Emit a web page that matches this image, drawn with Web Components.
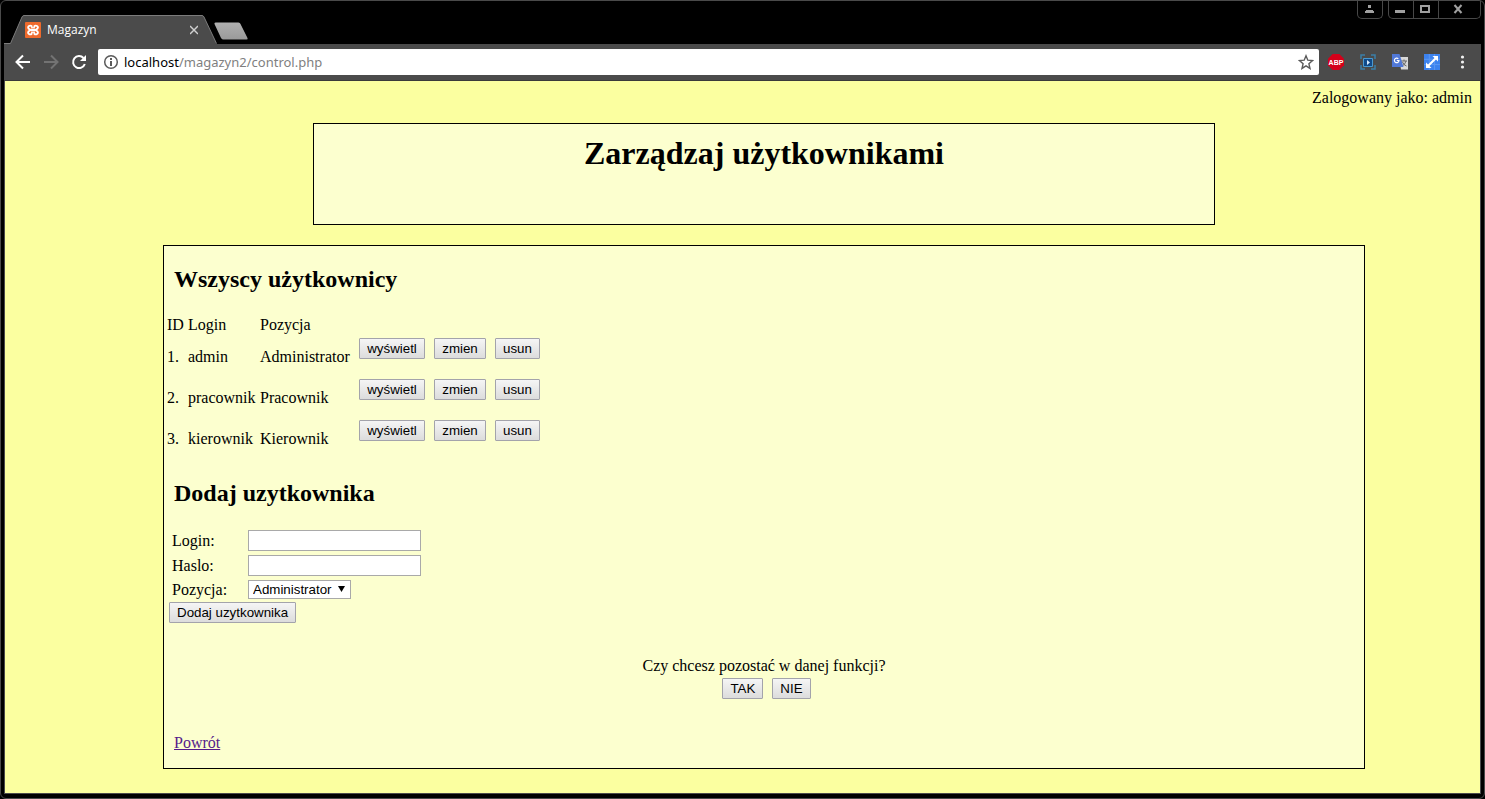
<!DOCTYPE html>
<html lang="pl">
<head>
<meta charset="utf-8">
<title>Magazyn</title>
<style>
html, body { height: 100%; margin: 0; background: #000; }
</style>
</head>
<body>
<browser-window>
  <tab-strip slot="tabs" label="Magazyn"></tab-strip>
  <browser-toolbar slot="toolbar" host="localhost" path="/magazyn2/control.php"></browser-toolbar>
  <admin-page></admin-page>
</browser-window>

<script>
const define = (name, html, setup) => customElements.define(name, class extends HTMLElement {
  constructor() {
    super();
    this.attachShadow({ mode: 'open' }).innerHTML = html;
  }
  connectedCallback() {
    if (setup && !this.ready) { this.ready = true; setup(this, this.shadowRoot); }
  }
});

/* Raised grey push button with a real <button> inside. */
define('push-button', `
<style>
  :host { display: inline-block; vertical-align: top; }
  button {
    display: block; box-sizing: border-box; width: 100%; height: 21px; margin: 0; padding: 0 7px;
    border: 1px solid #a3a3ab; border-radius: 1px;
    background: linear-gradient(#f5f5f5, #dcdcdc);
    font-family: "Liberation Sans", Arial, sans-serif; color: #000; white-space: nowrap;
  }
</style>
<button type="button"><slot></slot></button>`);

/* Bordered pale box. */
define('site-panel', `
<style>
  :host { display: block; box-sizing: border-box; width: 100%; margin: 0 auto; border: 1px solid #000; background: #fcffcf; }
</style>
<slot></slot>`);

define('section-title', `
<style>
  :host { display: block; padding: 20px 10px; }
  h2 { margin: 0; font-size: 24px; line-height: 27px; }
</style>
<h2><slot></slot></h2>`);

define('user-table', `
<style>
  :host { display: block; }
  table { border-spacing: 2px; border-collapse: separate; table-layout: fixed; width: 379px; }
  th, td { padding: 1px; font-weight: normal; text-align: left; line-height: 18px; white-space: nowrap; }
  push-button { display: block; margin: 0 0 16px 5px; }
  .id { width: 19px; } .login { width: 70px; } .role { width: 92px; }
  .show { width: 73px; } .edit { width: 59px; } .drop { width: 52px; }
</style>
<table>
  <colgroup><col class="id"><col class="login"><col class="role"><col class="show"><col class="edit"><col class="drop"></colgroup>
  <thead><tr><th>ID</th><th>Login</th><th>Pozycja</th></tr></thead>
  <tbody></tbody>
</table>`, (el, root) => {
  const users = [['admin', 'Administrator'], ['pracownik', 'Pracownik'], ['kierownik', 'Kierownik']];
  root.querySelector('tbody').innerHTML = users.map(([login, role], i) => `
    <tr><td>${i + 1}.</td><td>${login}</td><td>${role}</td>
    ${['wyświetl', 'zmien', 'usun'].map(t => `<td><push-button>${t}</push-button></td>`).join('')}</tr>`).join('');
});

define('user-form', `
<style>
  :host { display: block; padding-left: 5px; }
  form { margin: 0; }
  .grid { display: grid; grid-template-columns: 72px max-content; gap: 4px; padding: 3px; align-items: center; justify-items: start; line-height: 18px; }
  input, select {
    box-sizing: border-box; margin: 0; border: 1px solid #a9a9a9; border-radius: 0;
    background: #fff; color: #000; font-family: "Liberation Sans", Arial, sans-serif;
  }
  input { width: 173px; height: 21px; padding: 1px; }
  .pick { display: grid; align-items: center; }
  .pick > * { grid-area: 1 / 1; }
  select { appearance: none; height: 19px; width: 103px; padding: 0 4px; }
  svg { justify-self: end; margin-right: 6px; pointer-events: none; }
</style>
<form>
  <div class="grid">
    <label for="login">Login:</label><input id="login" type="text">
    <label for="haslo">Haslo:</label><input id="haslo" type="password">
    <label for="pozycja">Pozycja:</label>
    <span class="pick">
      <select id="pozycja"><option>Administrator</option><option>Pracownik</option><option>Kierownik</option></select>
      <svg width="7" height="7" viewBox="0 0 7 7" aria-hidden="true"><path d="M0 0h7L3.500 6z"/></svg>
    </span>
  </div>
  <push-button>Dodaj uzytkownika</push-button>
</form>`);

define('stay-prompt', `
<style>
  :host { display: block; text-align: center; line-height: 18px; }
  p { margin: 0 0 3px; }
  div { display: flex; justify-content: center; gap: 4px; }
  push-button { margin-left: 5px; }
</style>
<p>Czy chcesz pozostać w danej funkcji?</p>
<div><push-button>TAK</push-button><push-button>NIE</push-button></div>`);

define('admin-page', `
<style>
  :host { display: block; padding: 8px 8px 24px 51px; font: 16px/18px "Liberation Serif", "Times New Roman", serif; color: #000; }
  .user { text-align: right; margin-bottom: 16px; }
  .head { max-width: 902px; min-height: 102px; margin-bottom: 20px; text-align: center; }
  h1 { margin: 0; padding-top: 11px; font-size: 32px; line-height: 36px; }
  .body { max-width: 1202px; }
  stay-prompt { margin-top: 34px; }
  .back { margin: 35px 10px 16px; }
  a { color: #551a8b; }
</style>
<div class="user">Zalogowany jako: admin</div>
<site-panel class="head"><h1>Zarządzaj użytkownikami</h1></site-panel>
<site-panel class="body">
  <section-title>Wszyscy użytkownicy</section-title>
  <user-table></user-table>
  <section-title>Dodaj uzytkownika</section-title>
  <user-form></user-form>
  <stay-prompt></stay-prompt>
  <div class="back"><a href="#">Powrót</a></div>
</site-panel>`);

define('window-controls', `
<style>
  :host { display: flex; gap: 5px; }
  div { display: flex; height: 17px; border: 1px solid #484848; border-top: 0; border-radius: 0 0 5px 5px; }
  button { padding: 0; border: 0; background: none; width: 24px; height: 17px; }
  button + button { border-left: 1px solid #484848; width: 25px; }
  button.close { width: 42px; }
  svg { display: block; margin: auto; }
</style>
<div><button aria-label="Profil"><svg width="24" height="17" fill="#a0a0a0"><path d="M10 4h3v3h-3zM8 9h7v2H8zM7 10h9v2H7z"/></svg></button></div>
<div>
  <button aria-label="Minimalizuj"><svg width="24" height="17"><path d="M6 9h10v3H6z" fill="#a0a0a0"/></svg></button>
  <button aria-label="Maksymalizuj"><svg width="24" height="17"><path d="M7 5h8v6H7z" fill="none" stroke="#a0a0a0" stroke-width="2"/></svg></button>
  <button class="close" aria-label="Zamknij"><svg width="41" height="17"><path d="M15.500 4l7 8M22.500 4l-7 8" stroke="#a0a0a0" stroke-width="2"/></svg></button>
</div>`);

define('tab-strip', `
<style>
  :host { display: grid; grid-template-columns: 246px 1fr auto; height: 43px; font: 12px/16px "Open Sans", "Segoe UI", sans-serif; color: #fff; }
  .tab { display: grid; grid-area: 1 / 1; }
  .tab > * { grid-area: 1 / 1; }
  .row { display: flex; align-items: center; height: 30px; margin-top: 14px; padding-left: 21px; }
  .title { width: 143px; margin-left: 6px; }
  .line { align-self: end; height: 1px; background: #7c7c7c; grid-column: 1 / -1; grid-row: 1; margin-left: 212px; }
  window-controls { grid-area: 1 / 3; }
  button { padding: 0; border: 0; background: none; height: 10px; }
  svg { display: block; }
</style>
<div class="tab">
  <svg width="246" height="43">
    <defs><linearGradient id="g" x2="0" y2="1"><stop stop-color="#b0b0b0"/><stop offset="1" stop-color="#9a9a9a"/></linearGradient></defs>
    <path d="M0 42.500h6.500L18 16q.700-1.500 2-1.500h178q1.300 0 2 1.500l12.500 26.500V43H0z" fill="#4b4b4b"/>
    <path d="M0 42.500h6.500L18 16q.700-1.500 2-1.500h178q1.300 0 2 1.500l12.500 26.500" fill="none" stroke="#7c7c7c"/>
    <path d="M210.500 23q-.500-1.500 1-1.500h23q1.500 0 2 1.500l7 14q.700 1.500-1 1.500h-23q-1.500 0-2.500-1.500z" fill="url(#g)"/>
  </svg>
  <div class="row">
    <svg width="16" height="16" viewBox="0 0 16 16"><rect width="16" height="16" rx="1" fill="#ee6a2c"/><path d="M7 4.500Q5.500 3 4 4t-.500 2.500L5.500 8l-2 1.500Q2.500 11 4 12t3-.500M9 4.500Q10.500 3 12 4t.500 2.500L10.500 8l2 1.500q1 1.500-.500 2.500t-3-.500M5.500 8h5M7 4.500v2M9 4.500v2M7 9.500v2M9 9.500v2" fill="none" stroke="#fff" stroke-width="1.800"/></svg>
    <span class="title"></span>
    <button aria-label="Zamknij kartę"><svg width="8" height="10"><path d="M0 1l8 8M8 1L0 9" stroke="#d0d0d0" stroke-width="1.500"/></svg></button>
  </div>
</div>
<div class="line"></div>
<window-controls></window-controls>`, (el, root) => {
  root.querySelector('.title').textContent = el.getAttribute('label');
});

define('browser-toolbar', `
<style>
  :host { display: flex; align-items: center; height: 37px; box-sizing: border-box; padding: 0 9px 0 11px; background: #4b4b4b; border-bottom: 1px solid #3a3a3a; font: 13px/18px "Noto Sans", "Segoe UI", sans-serif; }
  button { flex: none; padding: 0; border: 0; background: none; width: 16px; height: 16px; }
  svg { display: block; }
  .nav, .ext { display: flex; gap: 12px; }
  .ext { gap: 16px; margin-left: 9px; }
  .bar { flex: 1; min-width: 0; display: flex; align-items: center; gap: 5px; height: 26px; margin-left: 11px; padding: 0 5px; border-radius: 2px; background: #fff; }
  .url { flex: 1; color: #7f7f7f; }
  b { font-weight: normal; color: #000; }
</style>
<div class="nav">
  <button aria-label="Wstecz"><svg width="16" height="16" fill="none" stroke="#fff" stroke-width="2"><path d="M15 8H2M8 1.500L1.500 8 8 14.500"/></svg></button>
  <button aria-label="Dalej"><svg width="16" height="16" fill="none" stroke="#737373" stroke-width="2"><path d="M1 8h13M8 1.500L14.500 8 8 14.500"/></svg></button>
  <button aria-label="Odśwież"><svg width="16" height="16" fill="none" stroke="#fff" stroke-width="2"><path d="M13.800 10A6 6 0 1 1 12.500 4"/><path d="M15 1v6H9z" fill="#fff" stroke="none"/></svg></button>
</div>
<div class="bar">
  <svg width="16" height="16"><circle cx="8" cy="8" r="6.300" fill="none" stroke="#5a5a5a" stroke-width="1.500"/><path d="M7 4h2v2H7zM7 7h2v5H7z" fill="#5a5a5a"/></svg>
  <span class="url"><b></b><span></span></span>
  <button aria-label="Dodaj zakładkę"><svg width="16" height="16"><path d="M8 1.800l1.800 4.400 4.700.4-3.600 3.100 1.100 4.700L8 11.900l-4 2.500 1.100-4.700-3.600-3.100 4.700-.4z" fill="none" stroke="#5a5a5a" stroke-width="1.400"/></svg></button>
</div>
<div class="ext">
  <button aria-label="Adblock Plus"><svg width="16" height="16"><path d="M4.700 0h6.600L16 4.700v6.600L11.300 16H4.700L0 11.300V4.700z" fill="#d4001a"/><text x="8" y="11" text-anchor="middle" fill="#fff" font-family="Liberation Sans, sans-serif" font-weight="bold" font-size="7">ABP</text></svg></button>
  <button aria-label="Zrzut ekranu"><svg width="16" height="16"><path d="M1 5V1h4M11 1h4v4M15 11v4h-4M5 15H1v-4" fill="none" stroke="#3b7fa8" stroke-width="1.500"/><rect x="3" y="4" width="10" height="9" rx="1" fill="#4a9ad0"/><rect x="4" y="5" width="8" height="7" fill="#0f4a8a"/><path d="M7 6l3 2.500L7 11z" fill="#d8ecff"/></svg></button>
  <button aria-label="Tłumacz"><svg width="16" height="16"><path d="M7 3h9v12.500H9z" fill="#d8d8d8"/><path d="M9 7h6M12 5.500V7M14 7q-1 4-4 5M10.500 8q1 3 4 4" fill="none" stroke="#666"/><path d="M0 0h7.500l4 13H0z" fill="#5078d8"/><path d="M6.300 4.700A2.300 2.300 0 1 0 7 6.500H4.800" fill="none" stroke="#fff" stroke-width="1.200"/></svg></button>
  <button aria-label="Zmień rozmiar"><svg width="16" height="16"><path d="M0 0h16v16H0z" fill="#3c82ee"/><path d="M5.300 0v16M10.600 0v16M0 5.300h16M0 10.600h16" stroke="#5b98f3"/><path d="M8.500 2H14v5.500L12 5.500 5.500 12l2 2H2V8.500l2 2L10.500 4z" fill="#fff"/></svg></button>
  <button aria-label="Menu"><svg width="16" height="16" fill="#f1f1f1"><circle cx="6.500" cy="3" r="1.600"/><circle cx="6.500" cy="8" r="1.600"/><circle cx="6.500" cy="13" r="1.600"/></svg></button>
</div>`, (el, root) => {
  root.querySelector('b').textContent = el.getAttribute('host');
  root.querySelector('.url span').textContent = el.getAttribute('path');
});

define('browser-window', `
<style>
  :host { display: flex; flex-direction: column; box-sizing: border-box; min-height: 100vh; padding: 0 3px 4px; background: #000; border: 1px solid #4a4a4a; border-radius: 6px; }
  main { flex: 1; background: #fbffa0; border: 1px solid #4b4b4b; border-top: 0; }
</style>
<slot name="tabs"></slot>
<slot name="toolbar"></slot>
<main><slot></slot></main>`);
</script>
</body>
</html>
